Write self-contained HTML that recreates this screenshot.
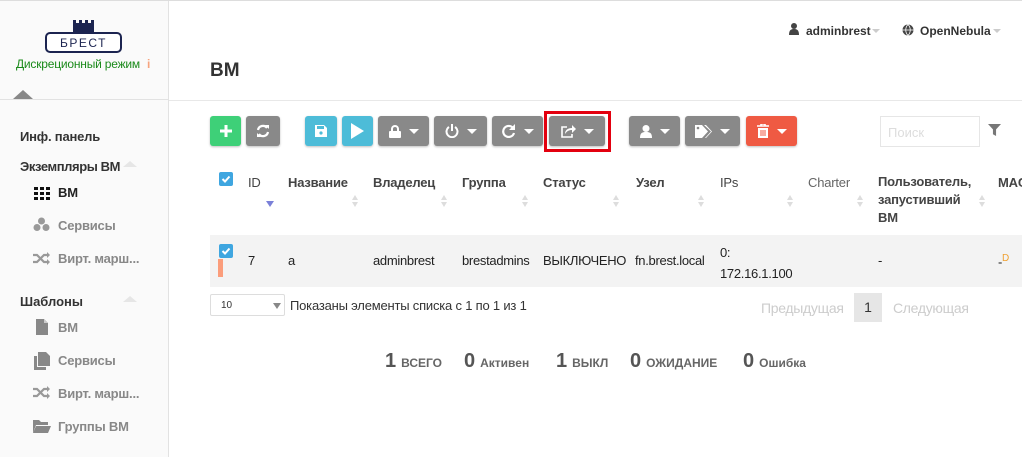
<!DOCTYPE html>
<html><head><meta charset="utf-8"><style>
*{box-sizing:border-box;margin:0;padding:0}
body{width:1022px;height:457px;overflow:hidden;background:#fff;font-family:"Liberation Sans","DejaVu Sans",sans-serif;position:relative;color:#333}
.a{position:absolute;white-space:nowrap}
#side{left:0;top:0;width:169px;height:457px;background:#fafafa;border-right:1px solid #e2e2e2}
.btn{position:absolute;top:116px;height:30px;border-radius:3px;background:#898989;color:#fff;box-shadow:0 1px 2px rgba(0,0,0,.25);display:flex;align-items:center;justify-content:center;gap:8px;font-size:14px}
.car{width:0;height:0;border-left:5px solid transparent;border-right:5px solid transparent;border-top:5px solid #fff}
.th{top:175px;font-size:13px;font-weight:bold;color:#444;letter-spacing:-.2px}
.td{top:253px;font-size:13px;color:#222;letter-spacing:-.3px}
.sort{position:absolute;width:7px;height:14px}
.sort:before{content:"";position:absolute;left:0;top:0;border-left:3.5px solid transparent;border-right:3.5px solid transparent;border-bottom:5px solid #ddd}
.sort:after{content:"";position:absolute;left:0;top:7px;border-left:3.5px solid transparent;border-right:3.5px solid transparent;border-top:5px solid #ddd}
.nav{font-size:13px;font-weight:bold;color:#888;letter-spacing:-.2px}
.cb{position:absolute;width:14px;height:14px;background:#3fa6e0;border-radius:2px}
.st{top:350px;font-size:20px;font-weight:bold;color:#555}
.st small{font-size:12px;color:#666;margin-left:5px}
svg{display:block}
</style></head><body>
<div class="a" id="side"></div>
<div class="a" style="left:0;top:0;width:1022px;border-top:1px solid #ddd"></div>
<div class="a" style="left:169px;top:100px;width:853px;border-top:1px solid #e8e8e8"></div>
<div class="a" style="left:0;top:99px;width:169px;border-top:1px solid #e2e2e2"></div>
<svg class="a" style="left:45px;top:20px" width="78" height="34" viewBox="0 0 78 34">
<path d="M28 0h3v3h3v-3h3v3h3v-3h3v3h3v-3h3v12h-21z" fill="#1c2450"/>
<rect x="1" y="13" width="75" height="19" rx="4" fill="#fff" stroke="#1c2450" stroke-width="2"/>
<text x="38.5" y="27" text-anchor="middle" font-family="Liberation Sans" font-size="12" fill="#1c2450" letter-spacing="1.5" transform="scale(1,1)">БРЕСТ</text>
</svg>
<div class="a" style="left:16px;top:57px;font-size:12px;color:#1a8a1a;letter-spacing:-.2px">Дискреционный режим</div>
<div class="a" style="left:147px;top:57px;font-size:12px;color:#f6a47e;font-weight:bold">i</div>
<div class="a" style="left:13px;top:90px;border-left:10px solid transparent;border-right:10px solid transparent;border-bottom:9px solid #888"></div>
<div class="a" style="left:20px;top:129px;font-size:13px;font-weight:bold;color:#333;letter-spacing:-.2px">Инф. панель</div>
<div class="a" style="left:20px;top:159px;font-size:13px;font-weight:bold;color:#333;letter-spacing:-.4px">Экземпляры ВМ</div>
<div class="a" style="left:123px;top:161px;border-left:7px solid transparent;border-right:7px solid transparent;border-bottom:6px solid #e6e6e6"></div>
<svg class="a" style="left:34px;top:187px" width="16" height="13"><g fill="#111"><rect x="0" y="0" width="4" height="3"/><rect x="6" y="0" width="4" height="3"/><rect x="12" y="0" width="4" height="3"/><rect x="0" y="5" width="4" height="3"/><rect x="6" y="5" width="4" height="3"/><rect x="12" y="5" width="4" height="3"/><rect x="0" y="10" width="4" height="3"/><rect x="6" y="10" width="4" height="3"/><rect x="12" y="10" width="4" height="3"/></g></svg>
<div class="a nav" style="left:58px;top:185px;color:#222">ВМ</div>
<svg class="a" style="left:33px;top:217px" width="17" height="15"><g fill="#999"><circle cx="8.5" cy="4" r="3.5"/><circle cx="4" cy="10.5" r="3.5"/><circle cx="13" cy="10.5" r="3.5"/></g></svg>
<div class="a nav" style="left:58px;top:218px">Сервисы</div>
<svg class="a" style="left:33px;top:252px" width="17" height="13"><path d="M0 3h4l7 7h4M0 10h4l7-7h4" stroke="#999" stroke-width="2.2" fill="none"/><path d="M14 0l3 3-3 3zM14 7l3 3-3 3z" fill="#999"/></svg>
<div class="a nav" style="left:58px;top:251px">Вирт. марш...</div>
<div class="a" style="left:20px;top:294px;font-size:13px;font-weight:bold;color:#333">Шаблоны</div>
<div class="a" style="left:123px;top:296px;border-left:7px solid transparent;border-right:7px solid transparent;border-bottom:6px solid #e6e6e6"></div>
<svg class="a" style="left:36px;top:319px" width="12" height="16"><path d="M0 0h8l4 4v12h-12z" fill="#888"/><path d="M8 0v4h4" fill="#ccc"/></svg>
<div class="a nav" style="left:58px;top:320px">ВМ</div>
<svg class="a" style="left:34px;top:352px" width="16" height="18"><path d="M4 0h8l4 4v10h-12z" fill="#888"/><path d="M0 4h3v11h9v3h-12z" fill="#888"/></svg>
<div class="a nav" style="left:58px;top:353px">Сервисы</div>
<svg class="a" style="left:33px;top:386px" width="17" height="13"><path d="M0 3h4l7 7h4M0 10h4l7-7h4" stroke="#999" stroke-width="2.2" fill="none"/><path d="M14 0l3 3-3 3zM14 7l3 3-3 3z" fill="#999"/></svg>
<div class="a nav" style="left:58px;top:386px">Вирт. марш...</div>
<svg class="a" style="left:33px;top:420px" width="18" height="13"><path d="M0 0h6l2 2h7v3h-12l-3 8z" fill="#888"/><path d="M3 6h15l-3 7h-15z" fill="#888"/></svg>
<div class="a nav" style="left:58px;top:419px">Группы ВМ</div>
<svg class="a" style="left:789px;top:23px" width="10" height="12"><circle cx="5" cy="3" r="3" fill="#444"/><path d="M0 12c0-5 2-6 5-6s5 1 5 6z" fill="#444"/></svg>
<div class="a" style="left:806px;top:24px;font-size:12px;font-weight:bold;color:#333">adminbrest</div>
<div class="a" style="left:872px;top:29px;border-left:4px solid transparent;border-right:4px solid transparent;border-top:4px solid #ccc"></div>
<svg class="a" style="left:902px;top:24px" width="12" height="12"><circle cx="6" cy="6" r="5.5" fill="#444"/><path d="M0.5 6h11M6 .5c-3 3-3 8 0 11M6 .5c3 3 3 8 0 11" stroke="#fff" stroke-width=".8" fill="none"/></svg>
<div class="a" style="left:920px;top:24px;font-size:12px;font-weight:bold;color:#333">OpenNebula</div>
<div class="a" style="left:993px;top:29px;border-left:4px solid transparent;border-right:4px solid transparent;border-top:4px solid #ccc"></div>
<div class="a" style="left:210px;top:60px;font-size:19px;font-weight:bold;color:#333">ВМ</div>
<!-- buttons -->
<div class="btn" style="left:210px;width:31px;background:#3ed078"><svg width="12" height="12"><path d="M6 0v12M0 6h12" stroke="#fff" stroke-width="3"/></svg></div>
<div class="btn" style="left:246px;width:34px"><svg width="14" height="14" viewBox="0 0 14 14"><path d="M2 6a5 5 0 0 1 9-2M12 8a5 5 0 0 1-9 2" stroke="#fff" stroke-width="2.2" fill="none"/><path d="M9 1l4 0 0 4zM5 13l-4 0 0-4z" fill="#fff"/></svg></div>
<div class="btn" style="left:305px;width:32px;background:#4dbcd8"><svg width="12" height="12"><path d="M0 0h9l3 3v9h-12z" fill="#fff"/><rect x="2" y="1" width="7" height="3" fill="#4dbcd8"/><circle cx="6" cy="8" r="1.6" fill="#4dbcd8"/></svg></div>
<div class="btn" style="left:342px;width:31px;background:#4dbcd8"><div style="border-top:8px solid transparent;border-bottom:8px solid transparent;border-left:13px solid #fff"></div></div>
<div class="btn" style="left:378px;width:51px"><svg width="12" height="13"><path d="M3 6V4a3 3 0 0 1 6 0v2" stroke="#fff" stroke-width="2" fill="none"/><rect x="0" y="6" width="12" height="7" rx="1" fill="#fff"/></svg><div class="car"></div></div>
<div class="btn" style="left:434px;width:53px"><svg width="14" height="14"><path d="M4 3a5.5 5.5 0 1 0 6 0" stroke="#fff" stroke-width="2" fill="none"/><path d="M7 0v7" stroke="#fff" stroke-width="2"/></svg><div class="car"></div></div>
<div class="btn" style="left:492px;width:51px"><svg width="14" height="14"><path d="M11 4a5.5 5.5 0 1 0 1 5" stroke="#fff" stroke-width="2.2" fill="none"/><path d="M13 0v6h-6z" fill="#fff"/></svg><div class="car"></div></div>
<div class="a" style="left:544px;top:111px;width:67px;height:41px;border:3px solid #e3000f"></div>
<div class="btn" style="left:549px;width:56px"><svg width="15" height="13"><path d="M6 2h-5v10h10v-3" stroke="#fff" stroke-width="1.6" fill="none"/><path d="M4 9c0-4 3-6 7-6v-3l4 4-4 4v-3c-3 0-5 1-7 4z" fill="#fff"/></svg><div class="car"></div></div>
<div class="btn" style="left:629px;width:51px"><svg width="12" height="13"><circle cx="6" cy="3.5" r="3.5" fill="#fff"/><path d="M0 13c0-5 2-6 6-6s6 1 6 6z" fill="#fff"/></svg><div class="car"></div></div>
<div class="btn" style="left:685px;width:55px"><svg width="17" height="13"><path d="M0 0h7l6 6.5-6 6.5h-7z" fill="#fff"/><circle cx="3" cy="3" r="1.3" fill="#898989"/><path d="M9 0h2l6 6.5-6 6.5h-1l6-6.5z" fill="#fff"/></svg><div class="car"></div></div>
<div class="btn" style="left:746px;width:51px;background:#ef5a43"><svg width="12" height="14"><path d="M0 2h12M4 2v-2h4v2" stroke="#fff" stroke-width="1.6" fill="none"/><path d="M1 4h10v10h-10z" fill="#fff"/><path d="M4 6v6M6 6v6M8 6v6" stroke="#ef5a43" stroke-width="1"/></svg><div class="car"></div></div>
<div class="a" style="left:880px;top:116px;width:100px;height:31px;border:1px solid #e6e6e6;font-size:13px;color:#ddd;padding:8px 7px">Поиск</div>
<div class="a" style="left:988px;top:124px;width:13px;height:12px;background:#777;clip-path:polygon(0 0,100% 0,62% 45%,62% 100%,38% 85%,38% 45%)"></div>
<!-- table -->
<div class="cb" style="left:219px;top:172px"><svg width="14" height="14"><path d="M3.5 7l2.5 2.5 4.5-5" stroke="#fff" stroke-width="2" fill="none"/></svg></div>
<div class="a th" style="left:248px;font-weight:normal">ID</div>
<div class="a" style="left:266px;top:201px;border-left:4px solid transparent;border-right:4px solid transparent;border-top:6px solid #7a80d8"></div>
<div class="a th" style="left:288px">Название</div><div class="sort" style="left:352px;top:195px"></div>
<div class="a th" style="left:373px">Владелец</div><div class="sort" style="left:441px;top:195px"></div>
<div class="a th" style="left:462px">Группа</div><div class="sort" style="left:522px;top:195px"></div>
<div class="a th" style="left:543px">Статус</div><div class="sort" style="left:613px;top:195px"></div>
<div class="a th" style="left:636px">Узел</div><div class="sort" style="left:698px;top:195px"></div>
<div class="a th" style="left:720px;font-weight:normal">IPs</div><div class="sort" style="left:787px;top:195px"></div>
<div class="a th" style="left:808px;font-weight:normal;color:#666">Charter</div><div class="sort" style="left:857px;top:195px"></div>
<div class="a th" style="left:878px;line-height:18px;top:173px">Пользователь,<br>запустивший<br>ВМ</div><div class="sort" style="left:979px;top:195px"></div>
<div class="a th" style="left:998px">MAC</div>
<div class="a" style="left:210px;top:235px;width:812px;height:52px;background:#f3f3f3"></div>
<div class="cb" style="left:219px;top:244px"><svg width="14" height="14"><path d="M3.5 7l2.5 2.5 4.5-5" stroke="#fff" stroke-width="2" fill="none"/></svg></div>
<div class="a" style="left:218px;top:259px;width:5px;height:18px;background:#fb9d7b"></div>
<div class="a td" style="left:248px">7</div>
<div class="a td" style="left:288px">a</div>
<div class="a td" style="left:373px">adminbrest</div>
<div class="a td" style="left:462px">brestadmins</div>
<div class="a td" style="left:543px">ВЫКЛЮЧЕНО</div>
<div class="a td" style="left:635px">fn.brest.local</div>
<div class="a td" style="left:720px;top:242px;line-height:21px">0:<br>172.16.1.100</div>
<div class="a td" style="left:878px">-</div>
<div class="a td" style="left:998px">-<sup style="color:#f0a030;font-size:10px">D</sup></div>
<div class="a" style="left:210px;top:294px;width:75px;height:22px;border:1px solid #ddd;border-radius:2px;font-size:10px;padding:5px 10px">10</div>
<div class="a" style="left:273px;top:303px;border-left:4px solid transparent;border-right:4px solid transparent;border-top:6px solid #888"></div>
<div class="a" style="left:290px;top:298px;font-size:13px;color:#333;letter-spacing:-.2px">Показаны элементы списка с 1 по 1 из 1</div>
<div class="a" style="left:761px;top:300px;font-size:14px;color:#ccc;letter-spacing:-.3px">Предыдущая</div>
<div class="a" style="left:854px;top:293px;width:28px;height:29px;background:#e6e6e6;font-size:14px;text-align:center;line-height:29px;color:#333">1</div>
<div class="a" style="left:893px;top:300px;font-size:14px;color:#ccc;letter-spacing:-.3px">Следующая</div>
<div class="a st" style="left:385px">1<small>ВСЕГО</small></div>
<div class="a st" style="left:464px">0<small>Активен</small></div>
<div class="a st" style="left:556px">1<small>ВЫКЛ</small></div>
<div class="a st" style="left:630px">0<small>ОЖИДАНИЕ</small></div>
<div class="a st" style="left:743px">0<small>Ошибка</small></div>
</body></html>
